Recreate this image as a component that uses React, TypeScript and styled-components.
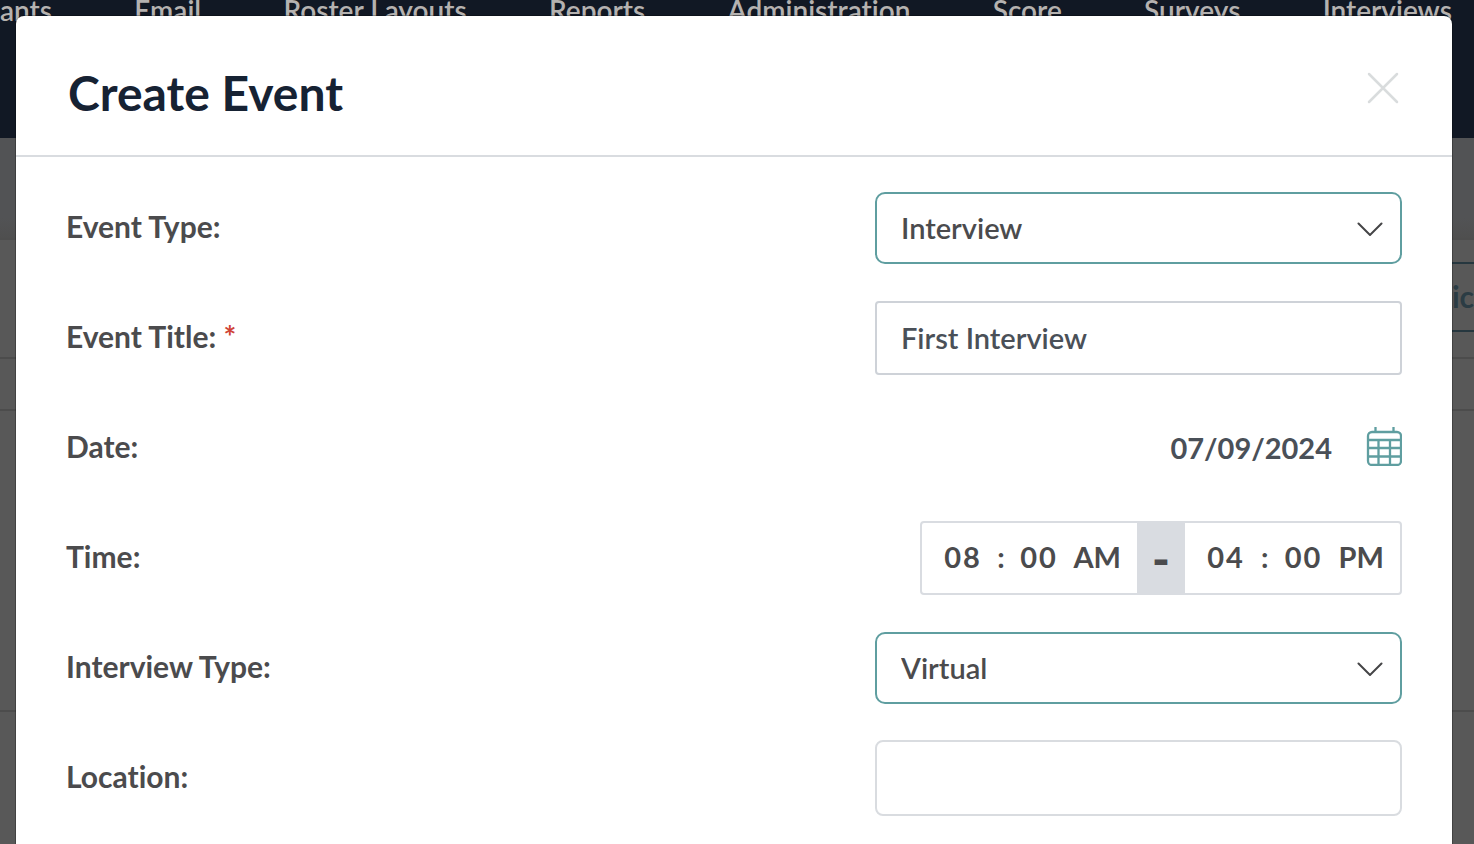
import React from 'react';
import styled, { createGlobalStyle } from 'styled-components';

const GlobalStyle = createGlobalStyle`
  *, *::before, *::after { box-sizing: border-box; }
  body {
    margin: 0;
    background: #585858;
    font-family: Lato, 'Open Sans', sans-serif;
    font-variant-ligatures: none;
    color: #4b4b4d;
  }
  button, input, select { font: inherit; color: inherit; margin: 0; }
`;

const Screen = styled.div`
  position: relative;
  height: 100vh;
  overflow: hidden;
`;

const NavBar = styled.nav`
  height: 138px;
  padding-right: 22px;
  background: #111824;
`;

const NavList = styled.ul`
  display: flex;
  justify-content: space-between;
  margin: 0;
  padding: 0;
  list-style: none;
`;

const NavLink = styled.a`
  color: #b5b2b0;
  font-size: 28px;
  font-weight: 600;
  line-height: 20px;
  text-decoration: none;
`;

const Band = styled.div`
  height: 102px;
  background: linear-gradient(#525355 80%, #4f4f4f);
  border-bottom: 2px solid #4e4e4e;
`;

const Toolbar = styled.div`
  display: flex;
  justify-content: flex-end;
  align-items: flex-start;
  height: 119px;
  padding-top: 22px;
  border-bottom: 2px solid #4c4c4c;
`;

const ToolbarButton = styled.button`
  width: 40px;
  height: 70px;
  padding: 0 0 2px;
  overflow: hidden;
  border: solid #26373f;
  border-width: 2px 0;
  background: none;
  color: #2b3c44;
  font-size: 30px;
  font-weight: 700;
  text-align: right;
`;

const ListRow = styled.div<{ $height: number }>`
  height: ${(p) => p.$height}px;
  border-bottom: 2px solid #4c4c4c;
`;

const Overlay = styled.div`
  position: absolute;
  inset: 0;
  padding: 16px 22px 0 16px;
`;

const Dialog = styled.section`
  min-height: 100%;
  border-radius: 8px 8px 0 0;
  background: #fff;
  box-shadow: 0 0 0 1px rgba(0, 0, 0, 0.25);
`;

const DialogHeader = styled.header`
  display: flex;
  justify-content: space-between;
  align-items: center;
  height: 141px;
  padding: 16px 52px 0;
  border-bottom: 2px solid #d9dce0;
`;

const Title = styled.h1`
  margin: 0;
  padding-bottom: 2px;
  color: #162233;
  font-size: 48px;
  font-weight: 700;
  line-height: 56px;
`;

const CloseButton = styled.button`
  display: flex;
  padding: 0 0 12px;
  border: 0;
  background: none;
  cursor: pointer;
`;

const Form = styled.form`
  padding: 16px 50px 0;
`;

const Row = styled.div`
  display: flex;
  justify-content: space-between;
  align-items: center;
  height: 110px;
`;

const Label = styled.label`
  padding-bottom: 4px;
  font-size: 30px;
  font-weight: 700;
  line-height: 36px;
`;

const Required = styled.span`
  color: #d04437;
`;

const SelectBox = styled.div`
  display: grid;
  align-items: center;
  width: 527px;

  & > * { grid-area: 1 / 1; }
`;

const Select = styled.select`
  appearance: none;
  width: 100%;
  height: 72px;
  padding: 0 72px 2px 24px;
  border: 2px solid #5f9ea0;
  border-radius: 10px;
  background: #fff;
  font-size: 29px;
  font-weight: 600;
`;

const Chevron = styled.svg`
  justify-self: end;
  margin-right: 19px;
  pointer-events: none;
`;

const TextInput = styled.input<{ $round?: boolean }>`
  width: 527px;
  height: ${(p) => (p.$round ? 76 : 74)}px;
  padding: 0 24px 2px;
  border: 2px solid ${(p) => (p.$round ? '#d9dce0' : '#ced2d8')};
  border-radius: ${(p) => (p.$round ? 8 : 4)}px;
  background: #fff;
  color: #4a5058;
  font-size: 29px;
  font-weight: 600;
`;

const DateField = styled.div`
  display: flex;
  align-items: center;
  gap: 34px;
`;

const DateInput = styled.input`
  width: 180px;
  padding: 0 0 2px;
  border: 0;
  background: none;
  color: #4a5058;
  font-size: 29px;
  font-weight: 700;
  text-align: right;
`;

const IconButton = styled.button`
  display: flex;
  padding: 0 0 4px;
  border: 0;
  background: none;
  cursor: pointer;
`;

const TimeRange = styled.div`
  display: flex;
  height: 74px;
  border: 2px solid #d9dce1;
  border-radius: 4px;
  font-size: 29px;
  font-weight: 700;
`;

const TimeGroup = styled.div`
  display: flex;
  align-items: center;
  justify-content: space-between;
  width: 215px;
  padding: 0 16px 4px 20px;
`;

const TimeInput = styled.input`
  width: 42px;
  padding: 0;
  border: 0;
  background: none;
  letter-spacing: 2px;
  text-align: center;
`;

const Meridiem = styled.button`
  padding: 0;
  border: 0;
  background: none;
`;

const Dash = styled.span`
  display: flex;
  align-items: center;
  justify-content: center;
  width: 48px;
  background: #d9dce1;
  font-size: 48px;
  font-weight: 900;
`;

const navItems = ['ants', 'Email', 'Roster Layouts', 'Reports', 'Administration', 'Score', 'Surveys', 'Interviews'];

function SelectField({ id, value, options }: { id: string; value: string; options: string[] }) {
  return (
    <SelectBox>
      <Select id={id} defaultValue={value}>
        {options.map((o) => (
          <option key={o}>{o}</option>
        ))}
      </Select>
      <Chevron width="26" height="16" viewBox="0 0 26 16" fill="none" stroke="#454547" strokeWidth="2" strokeLinecap="round">
        <path d="M1.5 3.500 13 15 24.500 3.500" />
      </Chevron>
    </SelectBox>
  );
}

function Time({ id, name, hour, minute, meridiem }: { id: string; name: string; hour: string; minute: string; meridiem: string }) {
  return (
    <TimeGroup>
      <TimeInput id={id} aria-label={`${name} hour`} defaultValue={hour} />
      <span>:</span>
      <TimeInput aria-label={`${name} minute`} defaultValue={minute} />
      <Meridiem type="button">{meridiem}</Meridiem>
    </TimeGroup>
  );
}

export default function App() {
  return (
    <Screen>
      <GlobalStyle />
      <NavBar>
        <NavList>
          {navItems.map((item) => (
            <li key={item}>
              <NavLink href="#">{item}</NavLink>
            </li>
          ))}
        </NavList>
      </NavBar>
      <Band />
      <Toolbar>
        <ToolbarButton>tic</ToolbarButton>
      </Toolbar>
      <ListRow $height={52} />
      <ListRow $height={301} />

      <Overlay>
        <Dialog role="dialog" aria-labelledby="dialog-title">
          <DialogHeader>
            <Title id="dialog-title">Create Event</Title>
            <CloseButton aria-label="Close">
              <svg width="34" height="34" viewBox="0 0 34 34" fill="none" stroke="#d9dcdd" strokeWidth="2.500" strokeLinecap="round">
                <path d="M3 3 31 31M31 3 3 31" />
              </svg>
            </CloseButton>
          </DialogHeader>
          <Form>
            <Row>
              <Label htmlFor="event-type">Event Type:</Label>
              <SelectField id="event-type" value="Interview" options={['Interview']} />
            </Row>
            <Row>
              <Label htmlFor="event-title">
                Event Title: <Required>*</Required>
              </Label>
              <TextInput id="event-title" defaultValue="First Interview" />
            </Row>
            <Row>
              <Label htmlFor="event-date">Date:</Label>
              <DateField>
                <DateInput id="event-date" defaultValue="07/09/2024" />
                <IconButton type="button" aria-label="Open calendar">
                  <svg width="36" height="40" viewBox="0 0 36 40" fill="none" stroke="#5f9ea0" strokeWidth="2.300">
                    <rect x="2" y="6" width="33" height="33" rx="4" />
                    <path d="M9.500 1v5M27.500 1v5M2 14h33M2 22h33M2 30.500h33M12.500 14v25M24 14v25" />
                  </svg>
                </IconButton>
              </DateField>
            </Row>
            <Row>
              <Label htmlFor="start-hour">Time:</Label>
              <TimeRange>
                <Time id="start-hour" name="Start" hour="08" minute="00" meridiem="AM" />
                <Dash>-</Dash>
                <Time id="end-hour" name="End" hour="04" minute="00" meridiem="PM" />
              </TimeRange>
            </Row>
            <Row>
              <Label htmlFor="interview-type">Interview Type:</Label>
              <SelectField id="interview-type" value="Virtual" options={['Virtual']} />
            </Row>
            <Row>
              <Label htmlFor="location">Location:</Label>
              <TextInput id="location" $round />
            </Row>
          </Form>
        </Dialog>
      </Overlay>
    </Screen>
  );
}
